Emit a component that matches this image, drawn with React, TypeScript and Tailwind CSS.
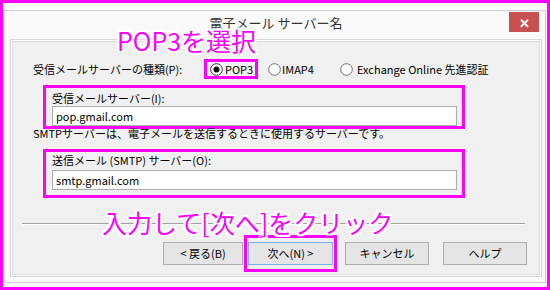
import React from "react";

const outline =
  "[text-shadow:2px_0_#fff,-2px_0_#fff,0_2px_#fff,0_-2px_#fff,2px_2px_#fff,-2px_-2px_#fff,2px_-2px_#fff,-2px_2px_#fff]";

const Radio = ({ checked }: { checked?: boolean }) => (
  <svg width="13" height="13" viewBox="0 0 13 13" className="shrink-0">
    <circle cx="6.5" cy="6.5" r="5.8" fill="#fff" stroke={checked ? "#333" : "#707070"} strokeWidth="1" />
    {checked && <circle cx="6.5" cy="6.5" r="3" fill="#111" />}
  </svg>
);

const App = () => {
  return (
    <div className="relative h-[290px] w-[550px] overflow-hidden border-[3px] border-[#ff00ff] bg-white pt-[7px] font-['Noto_Sans_CJK_JP',sans-serif] text-black">
      {/* dialog window */}
      <div className="flex h-[273px] w-[543px] flex-col border border-[#cdcdcd] bg-[#fafafa] pb-[5px] pl-[6px] pr-[3px]">
        <div className="grid h-[28px] shrink-0 grid-cols-[1fr_auto_1fr]">
          <div />
          <div className="pt-[5px] text-[13px] leading-[13px] text-[#333]">電子メール サーバー名</div>
          <div className="flex justify-end">
            <div className="mr-[3px] mt-[1px] flex h-[20px] w-[30px] items-center justify-center bg-[#c75050] text-[13px] font-bold leading-none text-white">
              ✕
            </div>
          </div>
        </div>

        <div className="h-[238px] w-[532px] border border-[#d6d6d6] bg-[#fcfcfc] p-px">
          <div className="h-full w-full border border-[#dcdcdc] bg-[#f0f0f0] text-[11px]">
            <div className="ml-[20px] mt-[17px] flex h-[20px] items-center leading-[14px]">
              <span className="w-[171px]">受信メールサーバーの種類(P):</span>
              <div className="flex h-[20px] w-[54px] items-center border-[3px] border-[#ff00ff] pl-[3px]">
                <Radio checked />
                <span className="ml-[2px]">POP3</span>
              </div>
              <div className="ml-[10px] flex w-[72px] items-center">
                <Radio />
                <span className="ml-[1px]">IMAP4</span>
              </div>
              <div className="flex items-center">
                <Radio />
                <span className="ml-[4px]">Exchange Online 先進認証</span>
              </div>
            </div>

            <div className="ml-[30px] mt-[6px] h-[44px] w-[422px] border-[3px] border-[#ff00ff] pl-[6px] pt-[3px]">
              <div className="leading-[14px]">受信メールサーバー(I):</div>
              <div className="mt-[1px] h-[20px] w-[405px] border border-[#abadb3] bg-white pl-[3px] leading-[18px]">
                pop.gmail.com
              </div>
            </div>

            <div className="ml-[20px] leading-[8px]">
              SMTPサーバーは、電子メールを送信するときに使用するサーバーです。
            </div>

            <div className="ml-[30px] mt-[12px] h-[49px] w-[422px] border-[3px] border-[#ff00ff] pl-[6px] pt-[1px]">
              <div className="leading-[14px]">送信メール (SMTP) サーバー(O):</div>
              <div className="mt-[3px] h-[20px] w-[405px] border border-[#abadb3] bg-white pl-[3px] leading-[18px]">
                smtp.gmail.com
              </div>
            </div>

            <div className="ml-[9px] mt-[25px] h-[2px] w-[503px] border-t border-[#a0a0a0] bg-white" />

            <div className="mt-[10px] flex h-[37px] items-center justify-end pr-[12px]">
              <button className="h-[23px] w-[80px] border border-[#adadad] bg-[#e5e5e5] leading-[21px]">
                &lt; 戻る(B)
              </button>
              <div className="ml-[1px] flex h-[37px] w-[93px] items-center border-[3px] border-[#ff00ff] pl-[1px]">
                <button className="h-[23px] w-[85px] border border-[#7ab2e6] bg-[#e5e5e5] leading-[21px]">
                  次へ(N) &gt;
                </button>
              </div>
              <button className="ml-[8px] h-[23px] w-[84px] border border-[#adadad] bg-[#e5e5e5] leading-[21px]">
                キャンセル
              </button>
              <button className="ml-[14px] h-[23px] w-[84px] border border-[#adadad] bg-[#e5e5e5] leading-[21px]">
                ヘルプ
              </button>
            </div>
          </div>
        </div>
      </div>

      {/* annotations */}
      <div className={`absolute left-[114px] top-[25px] whitespace-nowrap text-[25px] leading-[25px] text-[#ff00ff] ${outline}`}>
        POP3を選択
      </div>
      <div className={`absolute left-[99px] top-[207px] whitespace-nowrap text-[25px] leading-[25px] text-[#ff00ff] ${outline}`}>
        入力して[次へ]をクリック
      </div>
    </div>
  );
};

export default App;
